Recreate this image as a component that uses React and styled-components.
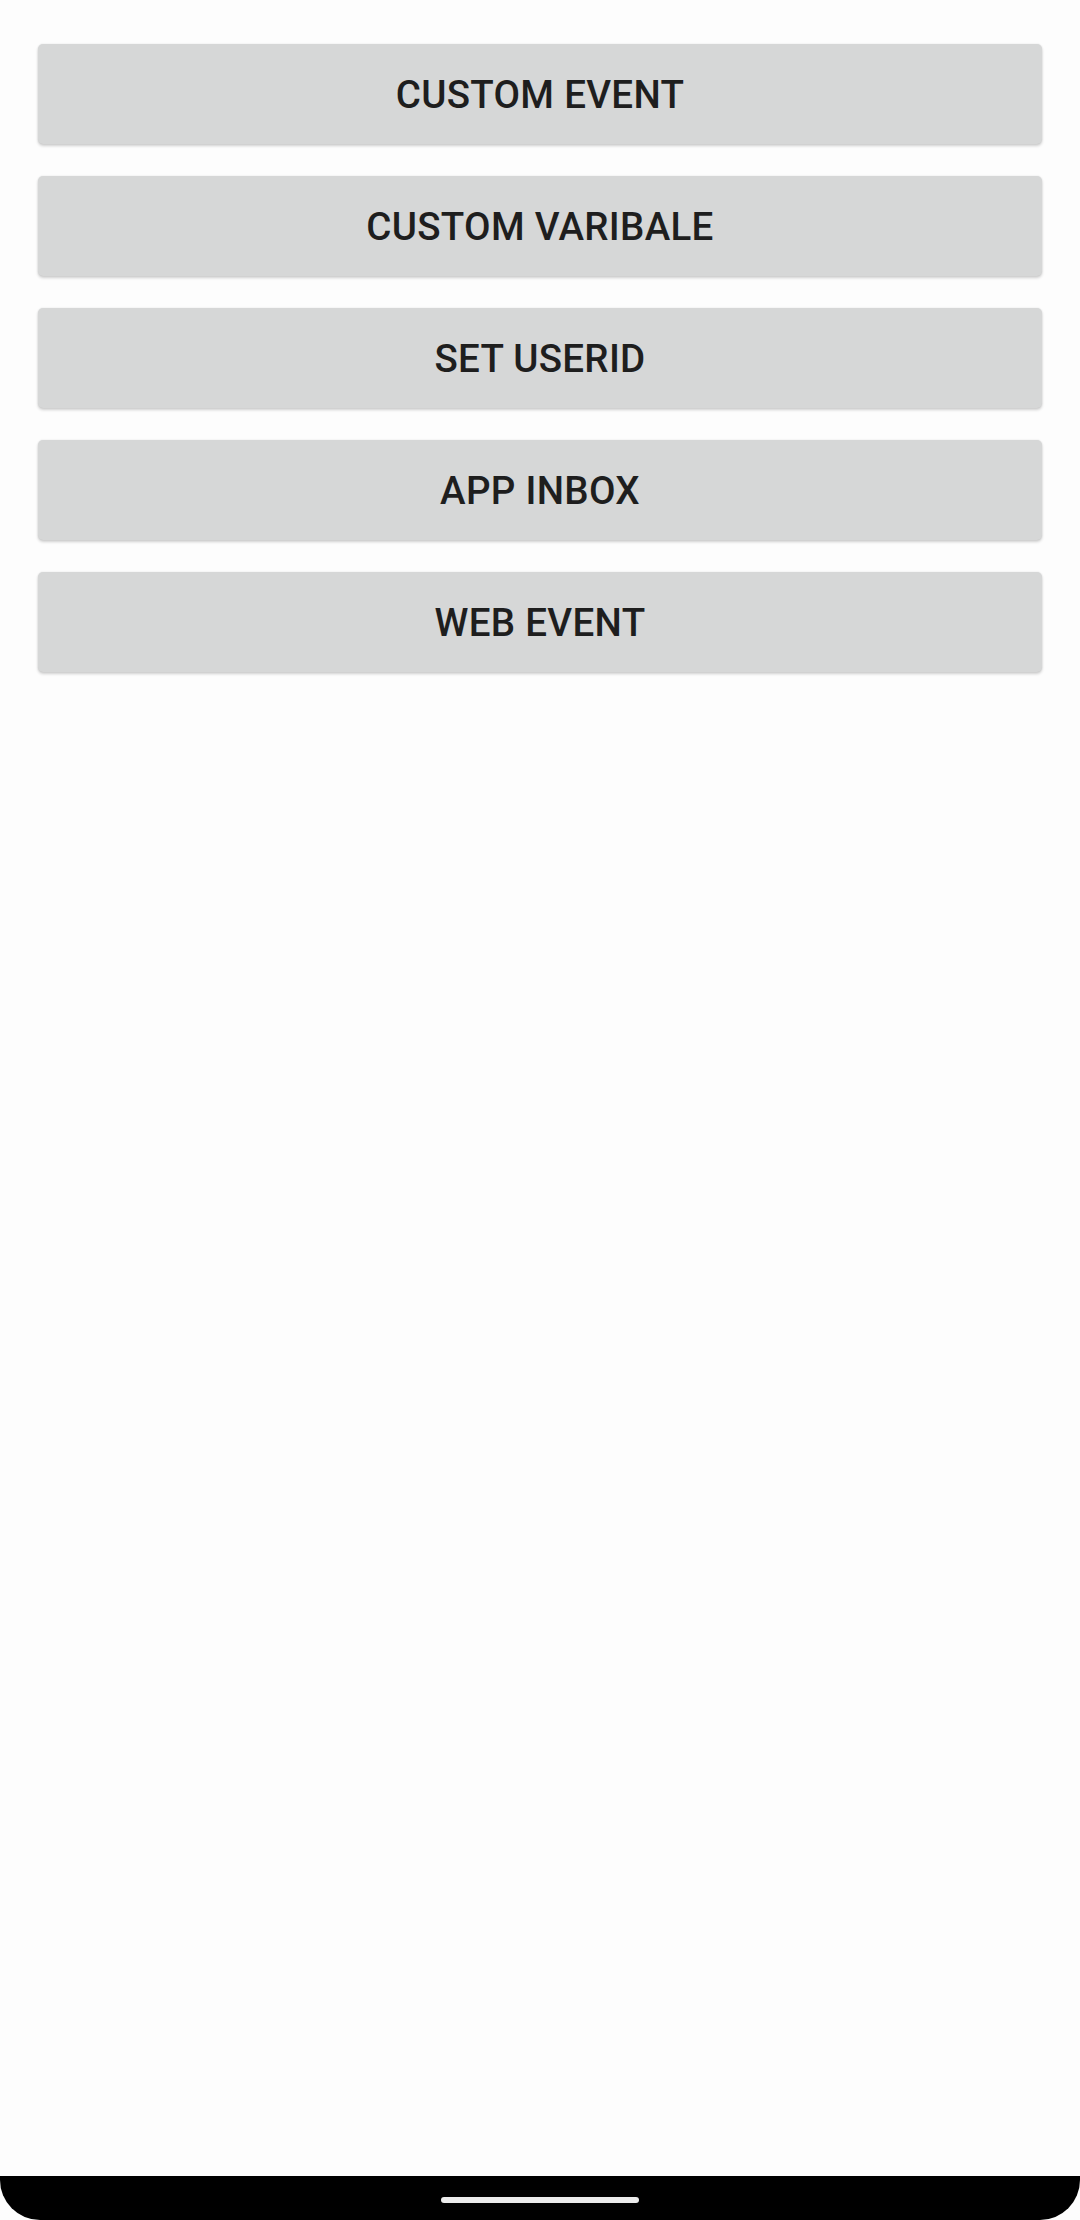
import React from "react";
import styled, { createGlobalStyle } from "styled-components";

const actions = [
  "CUSTOM EVENT",
  "CUSTOM VARIBALE",
  "SET USERID",
  "APP INBOX",
  "WEB EVENT",
];

export default function App() {
  return (
    <>
      <GlobalStyle />
      <Screen>
        <ButtonList>
          {actions.map((label) => (
            <ActionButton key={label}>{label}</ActionButton>
          ))}
        </ButtonList>
        <NavBar>
          <Handle />
        </NavBar>
      </Screen>
    </>
  );
}

const GlobalStyle = createGlobalStyle`
  body {
    margin: 0;
    background: #fff;
    font-family: Roboto, "Noto Sans", sans-serif;
  }
`;

const Screen = styled.div`
  width: 1080px;
  height: 2220px;
  display: flex;
  flex-direction: column;
  background: #fdfdfd;
`;

const ButtonList = styled.div`
  flex: 1;
  display: flex;
  flex-direction: column;
  gap: 32px;
  padding: 44px 38px 0;
`;

const ActionButton = styled.button`
  height: 100px;
  border: none;
  border-radius: 5px;
  background: #d6d7d7;
  color: #1e1e1e;
  font-family: Roboto, sans-serif;
  font-weight: 500;
  font-size: 38.5px;
  letter-spacing: 0.3px;
  box-shadow: 0 2px 3px rgba(0, 0, 0, 0.18), 0 0 2px rgba(0, 0, 0, 0.1);
  cursor: pointer;
`;

const NavBar = styled.div`
  height: 44px;
  background: #000;
  border-radius: 0 0 40px 40px;
  display: flex;
  justify-content: center;
  padding-top: 21px;
  box-sizing: border-box;
`;

const Handle = styled.div`
  width: 198px;
  height: 6px;
  border-radius: 3px;
  background: #ececec;
`;
